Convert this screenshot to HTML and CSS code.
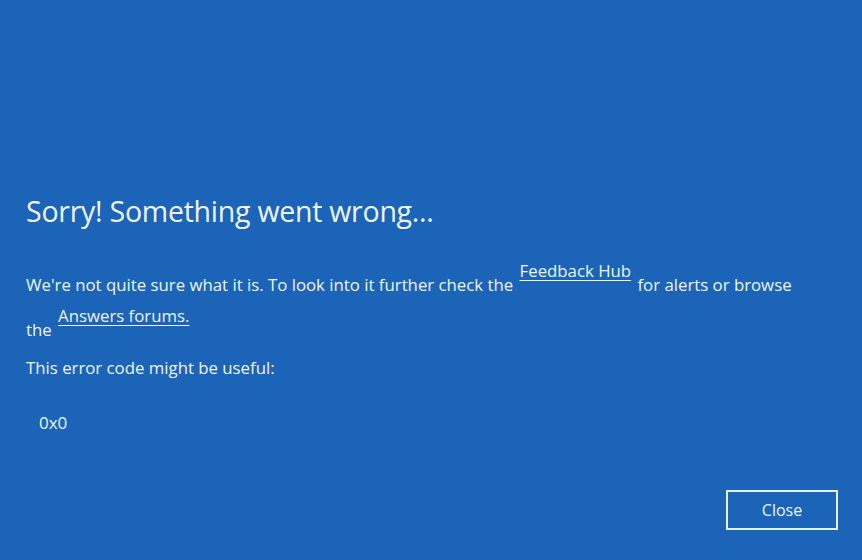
FILE: index.html
```html
<!DOCTYPE html>
<html>
<head>
    <meta charset="utf-8">
    <title>Something went wrong</title>
    <link rel="stylesheet" href="styles.css">
</head>
<body>

    <div class="screen">
        <div class="content">
            <h1 class="title">Sorry! Something went wrong...</h1>

            <p class="text">
                We're not quite sure what it is. To look into it further check the
                <a href="#" class="link">Feedback Hub</a>
                for alerts or browse the
                <a href="#" class="link">Answers forums.</a>
            </p>

            <p class="text note">This error code might be useful:</p>

            <p class="code">0x0</p>
        </div>

        <div class="actions">
            <button class="close-btn">Close</button>
        </div>
    </div>

</body>
</html>
```

FILE: styles.css
```css
        body {
            margin: 0;
            background-color: #1b64b8;
            color: #eef4fb;
            font-family: "Open Sans", "Noto Sans", Arial, sans-serif;
        }

        .screen {
            height: 560px;
            display: flex;
            flex-direction: column;
            justify-content: space-between;
            box-sizing: border-box;
            padding: 192px 24px 30px 26px;
        }

        .title {
            margin: 0 0 31px;
            font-size: 28.5px;
            font-weight: normal;
            letter-spacing: -0.25px;
        }

        .text {
            width: 775px;
            margin: 0;
            font-size: 16.8px;
            line-height: 42px;
        }

        .note {
            line-height: 34px;
        }

        .link {
            color: #eef4fb;
            vertical-align: 14px;
            margin: 0 2px;
            line-height: 20px;
            white-space: nowrap;
            text-underline-offset: 3px;
        }

        .code {
            margin: 26px 0 0 13px;
            font-size: 17px;
        }

        .actions {
            display: flex;
            justify-content: flex-end;
        }

        .close-btn {
            width: 112px;
            height: 40px;
            color: #eef4fb;
            background: transparent;
            border: 2px solid #e6eef8;
            font: 16px "Open Sans", "Noto Sans", Arial, sans-serif;
        }
```
